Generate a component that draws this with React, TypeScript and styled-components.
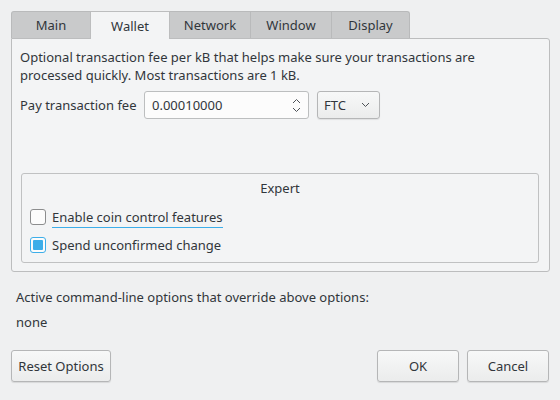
import styled, { createGlobalStyle } from 'styled-components';

const GlobalStyle = createGlobalStyle`
  html, body {
    margin: 0;
    padding: 0;
    background: #eff0f1;
  }
  body {
    font-family: 'Noto Sans', 'Open Sans', sans-serif;
    font-size: 13px;
    color: #31363b;
  }
`;

const tabs = [
  { label: 'Main', width: 80 },
  { label: 'Wallet', width: 80, active: true },
  { label: 'Network', width: 82 },
  { label: 'Window', width: 82 },
  { label: 'Display', width: 79 }
];

function Chevron({ up }: { up?: boolean }) {
  return (
    <svg width="9" height="6" viewBox="0 0 9 6">
      <path
        d={up ? 'M1 5 L4.5 1.5 L8 5' : 'M1 1 L4.5 4.5 L8 1'}
        fill="none"
        stroke="#4d5257"
        strokeWidth="1"
      />
    </svg>
  );
}

function App() {
  return (
    <Page>
      <GlobalStyle />
      <TabBar>
        {tabs.map((t) => (
          <Tab key={t.label} $active={!!t.active} $width={t.width}>
            {t.label}
          </Tab>
        ))}
      </TabBar>
      <Panel>
        <Description>
          Optional transaction fee per kB that helps make sure your transactions are
          processed quickly. Most transactions are 1 kB.
        </Description>
        <FeeRow>
          <FeeLabel>Pay transaction fee</FeeLabel>
          <SpinBox>
            <span>0.00010000</span>
            <Arrows>
              <Chevron up />
              <Chevron />
            </Arrows>
          </SpinBox>
          <Combo>
            <span>FTC</span>
            <Chevron />
          </Combo>
        </FeeRow>
        <GroupBox>
          <GroupTitle>Expert</GroupTitle>
          <CheckRow>
            <CheckBox $checked={false} />
            <CheckLabel $focused>Enable coin control features</CheckLabel>
          </CheckRow>
          <CheckRow>
            <CheckBox $checked />
            <CheckLabel>Spend unconfirmed change</CheckLabel>
          </CheckRow>
        </GroupBox>
      </Panel>
      <InfoBlock>
        <InfoText>Active command-line options that override above options:</InfoText>
        <InfoText>none</InfoText>
      </InfoBlock>
      <ButtonBar>
        <Button $width={100}>Reset Options</Button>
        <Spacer />
        <Button $width={82}>OK</Button>
        <Button $width={82}>Cancel</Button>
      </ButtonBar>
    </Page>
  );
}

export default App;

const Page = styled.div`
  width: 560px;
  height: 400px;
  box-sizing: border-box;
  padding: 11px 10px 0 11px;
  display: flex;
  flex-direction: column;
`;

const TabBar = styled.div`
  display: flex;
  height: 27px;
`;

const Tab = styled.div<{ $active: boolean; $width: number }>`
  width: ${(p) => p.$width}px;
  box-sizing: border-box;
  display: flex;
  align-items: center;
  justify-content: center;
  background: ${(p) => (p.$active ? '#f3f4f5' : '#c9cacb')};
  border: 1px solid ${(p) => (p.$active ? '#bcbdbe' : '#b9babb')};
  border-bottom: none;
  margin-left: -1px;
  position: relative;
  z-index: ${(p) => (p.$active ? 2 : 1)};
  margin-bottom: ${(p) => (p.$active ? '-1px' : '0')};
  &:first-child {
    margin-left: 0;
    border-top-left-radius: 3px;
  }
  &:last-child {
    border-top-right-radius: 3px;
  }
`;

const Panel = styled.div`
  height: 234px;
  box-sizing: border-box;
  background: #f3f4f5;
  border: 1px solid #bcbdbe;
  border-radius: 0 3px 3px 3px;
  padding: 9px 10px 8px 8px;
  display: flex;
  flex-direction: column;
  position: relative;
  z-index: 1;
`;

const Description = styled.div`
  line-height: 18px;
`;

const FeeRow = styled.div`
  margin-top: 7px;
  display: flex;
  align-items: center;
  gap: 8px;
`;

const FeeLabel = styled.span`
  width: 116px;
  flex-shrink: 0;
  white-space: nowrap;
`;

const SpinBox = styled.div`
  width: 165px;
  height: 28px;
  box-sizing: border-box;
  background: #fcfcfc;
  border: 1px solid #bcbebf;
  border-radius: 3px;
  display: flex;
  align-items: center;
  justify-content: space-between;
  padding: 0 7px 0 7px;
`;

const Arrows = styled.div`
  display: flex;
  flex-direction: column;
  gap: 3px;
`;

const Combo = styled.div`
  width: 63px;
  height: 28px;
  box-sizing: border-box;
  background: linear-gradient(#f7f8f8, #ebecec);
  border: 1px solid #b5b6b7;
  border-radius: 3px;
  box-shadow: 0 1px 1px rgba(0, 0, 0, 0.08);
  display: flex;
  align-items: center;
  justify-content: space-between;
  padding: 0 9px 0 6px;
`;

const GroupBox = styled.div`
  margin: auto 0 0 1px;
  height: 90px;
  box-sizing: border-box;
  border: 1px solid #c0c1c2;
  border-radius: 3px;
  padding: 5px 8px;
  display: flex;
  flex-direction: column;
  gap: 4px;
`;

const GroupTitle = styled.div`
  text-align: center;
  line-height: 18px;
  margin-bottom: 4px;
`;

const CheckRow = styled.div`
  height: 24px;
  display: flex;
  align-items: center;
  gap: 6px;
`;

const CheckBox = styled.div<{ $checked: boolean }>`
  width: 16px;
  height: 16px;
  box-sizing: border-box;
  border-radius: 3px;
  background: #fcfcfc;
  border: 1px solid ${(p) => (p.$checked ? '#3daee9' : '#8c8d8e')};
  display: flex;
  align-items: center;
  justify-content: center;
  &::after {
    content: '';
    display: ${(p) => (p.$checked ? 'block' : 'none')};
    width: 10px;
    height: 10px;
    background: #3daee9;
    border-radius: 1px;
  }
`;

const CheckLabel = styled.span<{ $focused?: boolean }>`
  line-height: 18px;
  padding-bottom: ${(p) => (p.$focused ? '1px' : '0')};
  border-bottom: ${(p) => (p.$focused ? '1px solid #3daee9' : 'none')};
  margin-top: ${(p) => (p.$focused ? '2px' : '0')};
`;

const InfoBlock = styled.div`
  margin: 16px 0 0 5px;
  display: flex;
  flex-direction: column;
  gap: 7px;
`;

const InfoText = styled.div`
  line-height: 18px;
`;

const ButtonBar = styled.div`
  margin-top: 19px;
  display: flex;
  gap: 8px;
  padding-right: 1px;
`;

const Spacer = styled.div`
  flex: 1;
`;

const Button = styled.div<{ $width: number }>`
  width: ${(p) => p.$width}px;
  height: 32px;
  box-sizing: border-box;
  background: linear-gradient(#f7f8f8, #ebecec);
  border: 1px solid #b5b6b7;
  border-radius: 3px;
  box-shadow: 0 1px 1px rgba(0, 0, 0, 0.1);
  display: flex;
  align-items: center;
  justify-content: center;
`;
